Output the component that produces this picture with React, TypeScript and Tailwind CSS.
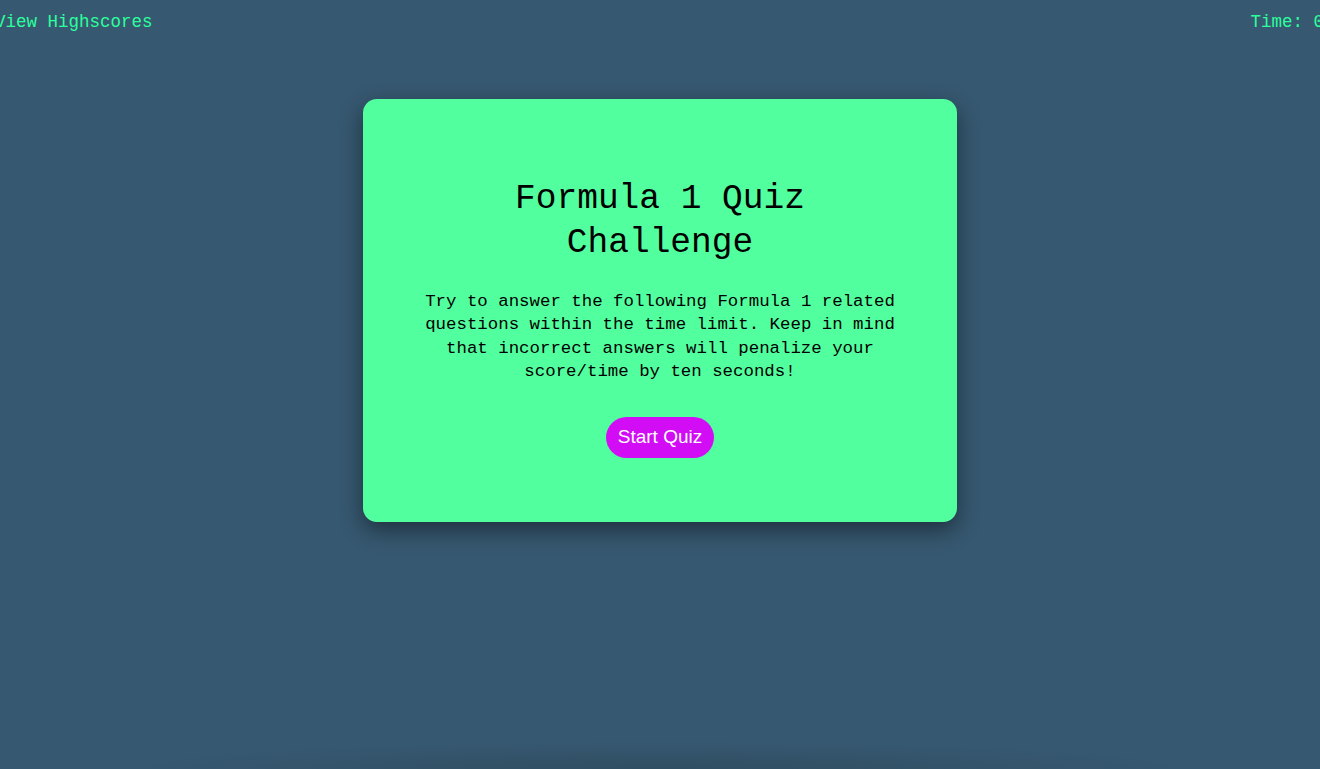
export default function App() {
  return (
    <main className="h-[769px] w-full overflow-hidden bg-[#365870] flex flex-col font-['Liberation_Mono','DejaVu_Sans_Mono',monospace]">
      <header className="flex justify-between items-center h-[42px] pt-[4px] ml-[-5px] mr-[-4px] text-[17.5px] text-[#2cff9d]">
        <a href="#" className="leading-none">View Highscores</a>
        <span className="leading-none">Time: 0</span>
      </header>

      <section className="mt-[57px] mx-auto w-[594px] h-[423px] bg-[#52ff9f] rounded-[14px] shadow-[0_8px_22px_rgba(0,0,0,0.45)] flex flex-col items-center pt-[78px] px-[50px] text-center text-black">
        <h1 className="text-[34.5px] leading-[44px] w-[340px]">Formula 1 Quiz Challenge</h1>
        <p className="mt-[25px] text-[17.4px] leading-[23.3px]">
          Try to answer the following Formula 1 related questions within the time limit. Keep in mind that
          incorrect answers will penalize your score/time by ten seconds!
        </p>
        <button className="mt-[34px] h-[41px] w-[108px] rounded-full bg-[#d20cf5] text-white text-[19px] font-['Liberation_Sans',Arial,sans-serif]">
          Start Quiz
        </button>
      </section>

      <div className="flex-1" />
      <div className="h-[28px] mx-[120px] bg-[radial-gradient(ellipse_at_bottom,rgba(0,0,0,0.12),transparent_70%)]" />
    </main>
  );
}
